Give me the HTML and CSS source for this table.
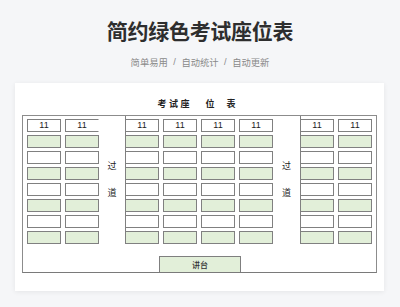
FILE: index.html
```html
<!DOCTYPE html>
<html lang="zh-CN">
<head>
<meta charset="utf-8">
<title>简约绿色考试座位表</title>
<link rel="stylesheet" href="styles.css">
</head>
<body>
<h1 class="title">简约绿色考试座位表</h1>
<div class="subtitle"><span>简单易用</span><span class="sep">/</span><span>自动统计</span><span class="sep">/</span><span>自动更新</span></div>
<div class="card">
  <div class="heading"><span class="h1c">考</span><span class="h2c">试</span><span class="h3c">座</span><span class="h4c">位</span><span>表</span></div>
  <div class="sheet">
    <div class="rows">
      <div class="group two">
        <div class="seat">11</div><div class="seat nr">11</div>
        <div class="seat g"></div><div class="seat g"></div>
        <div class="seat"></div><div class="seat"></div>
        <div class="seat g"></div><div class="seat g"></div>
        <div class="seat"></div><div class="seat"></div>
        <div class="seat g"></div><div class="seat g"></div>
        <div class="seat"></div><div class="seat"></div>
        <div class="seat g"></div><div class="seat g"></div>
      </div>
      <div class="aisle a1"><span>过</span><span>道</span></div>
      <div class="group four line">
        <div class="seat">11</div><div class="seat">11</div><div class="seat">11</div><div class="seat">11</div>
        <div class="seat g"></div><div class="seat g"></div><div class="seat g"></div><div class="seat g"></div>
        <div class="seat"></div><div class="seat"></div><div class="seat"></div><div class="seat"></div>
        <div class="seat g"></div><div class="seat g"></div><div class="seat g"></div><div class="seat g"></div>
        <div class="seat"></div><div class="seat"></div><div class="seat"></div><div class="seat"></div>
        <div class="seat g"></div><div class="seat g"></div><div class="seat g"></div><div class="seat g"></div>
        <div class="seat"></div><div class="seat"></div><div class="seat"></div><div class="seat"></div>
        <div class="seat g"></div><div class="seat g"></div><div class="seat g"></div><div class="seat g"></div>
      </div>
      <div class="aisle a2"><span>过</span><span>道</span></div>
      <div class="group two line">
        <div class="seat">11</div><div class="seat">11</div>
        <div class="seat g"></div><div class="seat g"></div>
        <div class="seat"></div><div class="seat"></div>
        <div class="seat g"></div><div class="seat g"></div>
        <div class="seat"></div><div class="seat"></div>
        <div class="seat g"></div><div class="seat g"></div>
        <div class="seat"></div><div class="seat"></div>
        <div class="seat g"></div><div class="seat g"></div>
      </div>
    </div>
    <div class="podium-row"><div class="podium">讲台</div></div>
  </div>
</div>
</body>
</html>
```
FILE: styles.css
```css
html, body {
  margin: 0;
  padding: 0;
}
body {
  background: #f5f6f8;
  width: 400px;
  height: 307px;
  overflow: hidden;
  font-family: "Noto Sans CJK SC", "Noto Sans", sans-serif;
  color: #333;
}
.title {
  margin: 0;
  padding-top: 15px;
  height: 30px;
  line-height: 30px;
  font-size: 21px;
  font-weight: 700;
  text-align: center;
  color: #2e2e2e;
  letter-spacing: -0.3px;
}
.subtitle {
  margin-top: 10px;
  height: 14px;
  line-height: 14px;
  font-size: 9.3px;
  color: #8a8a8a;
  display: flex;
  justify-content: center;
}
.subtitle .sep {
  margin: 0 5.5px;
  font-family: "Liberation Sans", sans-serif;
}
.card {
  margin: 14px 16px 0 15px;
  background: #fff;
  box-shadow: 0 1px 5px rgba(0, 0, 0, 0.07);
  padding: 0 7px 18px 7px;
}
.heading {
  height: 32px;
  box-sizing: border-box;
  padding-top: 15px;
  padding-right: 6px;
  display: flex;
  justify-content: center;
  font-size: 9px;
  line-height: 12px;
  font-weight: 700;
  color: #222;
}
.heading .h1c, .heading .h2c { margin-right: 2.5px; }
.heading .h3c { margin-right: 16px; }
.heading .h4c { margin-right: 12px; }
.sheet {
  width: 355px;
  box-sizing: border-box;
  border: 1px solid #8c8c8c;
  border-bottom-color: #7a7a7a;
}
.rows {
  display: flex;
  padding-left: 4px;
  height: 128px;
}
.group {
  display: grid;
  grid-auto-rows: 13px;
  column-gap: 4px;
  row-gap: 3px;
  padding-top: 3px;
}
.group.two { grid-template-columns: repeat(2, 34px); }
.group.four { grid-template-columns: repeat(4, 34px); }
.group.line {
  background: linear-gradient(#7f7f7f, #7f7f7f) left top / 1px 100% no-repeat;
}
.seat {
  box-sizing: border-box;
  border: 1px solid #808080;
  background: #fff;
  font-family: "Liberation Sans", sans-serif;
  font-size: 9px;
  line-height: 11px;
  text-align: center;
  color: #222;
}
.seat.g { background: #e2efd9; }
.seat.nr { border-right-color: transparent; }
.aisle {
  display: flex;
  flex-direction: column;
  justify-content: center;
  align-items: center;
  gap: 16px;
  font-size: 9px;
  line-height: 11px;
  color: #222;
  padding-bottom: 3px;
}
.aisle.a1 { width: 26px; }
.aisle.a2 { width: 27px; }
.podium-row {
  display: flex;
  justify-content: center;
  margin-top: 12px;
  padding-left: 1px;
}
.podium {
  width: 82px;
  height: 16px;
  box-sizing: border-box;
  border: 1px solid #7f7f7f;
  border-bottom: none;
  background: #e2efd9;
  font-size: 8px;
  line-height: 15px;
  text-align: center;
  color: #333;
  font-weight: 500;
}
```
